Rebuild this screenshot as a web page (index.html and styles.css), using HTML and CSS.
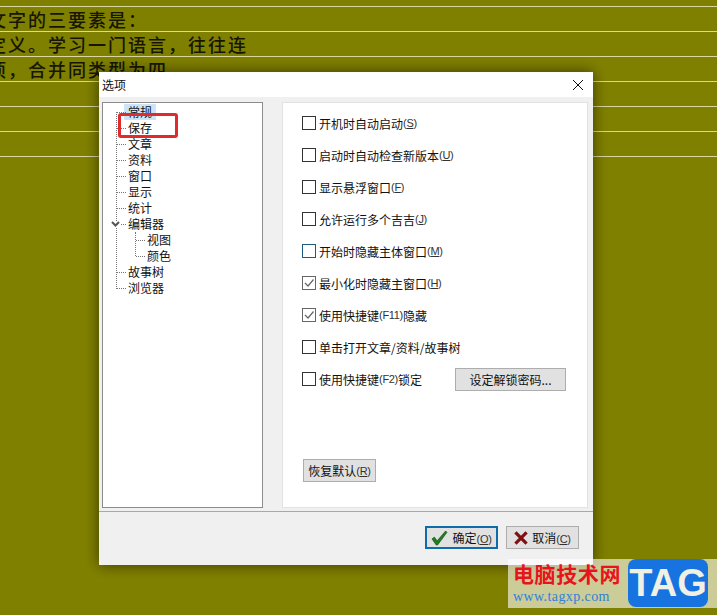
FILE: index.html
```html
<!DOCTYPE html>
<html lang="zh-CN">
<head>
    <meta charset="UTF-8">
    <meta name="viewport" content="width=device-width, initial-scale=1.0">
    <title>选项</title>
    <link rel="stylesheet" href="styles.css">
</head>
<body>
    <div class="page">
        <div class="doc-line"><span class="doc-text">文字的三要素是：</span></div>
        <div class="doc-line"><span class="doc-text">定义。学习一门语言，往往连</span></div>
        <div class="doc-line"><span class="doc-text">项，合并同类型为四</span></div>
        <div class="doc-line"></div>
        <div class="doc-line"></div>
        <div class="doc-line"></div>
    </div>

    <div class="dialog">
        <div class="title-bar">
            <span class="title">选项</span>
            <svg class="close-icon" width="12" height="12" viewBox="0 0 12 12">
                <path d="M1 1L11 11M11 1L1 11" stroke="#111" stroke-width="1" fill="none"/>
            </svg>
        </div>

        <div class="dialog-body">
            <div class="tree">
                <ul class="tree-list">
                    <li class="tree-item"><span class="tree-label selected">常规</span></li>
                    <li class="tree-item"><span class="tree-label">保存</span></li>
                    <li class="tree-item"><span class="tree-label">文章</span></li>
                    <li class="tree-item"><span class="tree-label">资料</span></li>
                    <li class="tree-item"><span class="tree-label">窗口</span></li>
                    <li class="tree-item"><span class="tree-label">显示</span></li>
                    <li class="tree-item"><span class="tree-label">统计</span></li>
                    <li class="tree-item tree-parent">
                        <svg class="chevron" width="9" height="6" viewBox="0 0 9 6">
                            <path d="M1 1L4.500 4.500L8 1" stroke="#555" stroke-width="2" fill="none"/>
                        </svg>
                        <span class="tree-label">编辑器</span>
                        <ul class="tree-sub">
                            <li class="tree-item"><span class="tree-label">视图</span></li>
                            <li class="tree-item"><span class="tree-label">颜色</span></li>
                        </ul>
                    </li>
                    <li class="tree-item"><span class="tree-label">故事树</span></li>
                    <li class="tree-item"><span class="tree-label">浏览器</span></li>
                </ul>
            </div>

            <div class="panel">
                <div class="option"><span class="check"></span>开机时自动启动<span class="key">(<u>S</u>)</span></div>
                <div class="option"><span class="check"></span>启动时自动检查新版本<span class="key">(<u>U</u>)</span></div>
                <div class="option"><span class="check"></span>显示悬浮窗口<span class="key">(<u>F</u>)</span></div>
                <div class="option"><span class="check"></span>允许运行多个吉吉<span class="key">(<u>J</u>)</span></div>
                <div class="option"><span class="check check-hover"></span>开始时隐藏主体窗口<span class="key">(<u>M</u>)</span></div>
                <div class="option">
                    <span class="check check-on">
                        <svg width="12" height="12" viewBox="0 0 12 12"><path d="M2 6L5 9L10.500 2.500" stroke="#666" stroke-width="1.200" fill="none"/></svg>
                    </span>最小化时隐藏主窗口<span class="key">(<u>H</u>)</span>
                </div>
                <div class="option">
                    <span class="check check-on">
                        <svg width="12" height="12" viewBox="0 0 12 12"><path d="M2 6L5 9L10.500 2.500" stroke="#666" stroke-width="1.200" fill="none"/></svg>
                    </span>使用快捷键<span class="key">(F11)</span>隐藏
                </div>
                <div class="option"><span class="check"></span>单击打开文章/资料/故事树</div>
                <div class="option">
                    <span class="check"></span>使用快捷键<span class="key">(F2)</span>锁定
                    <button class="btn btn-lock">设定解锁密码...</button>
                </div>
                <button class="btn btn-reset">恢复默认<span class="key">(<u>R</u>)</span></button>
            </div>
        </div>

        <div class="dialog-footer">
            <button class="btn btn-footer btn-default">
                <svg width="17" height="16" viewBox="0 0 18 17"><path d="M1 9.500L3.500 7.500L6.500 11.500L15.500 1L17 2.500L7 16H5.500Z" fill="#1e7d1e" stroke="#0c4a0c" stroke-width="0.600"/></svg>
                <span>确定<span class="key">(<u>O</u>)</span></span>
            </button>
            <button class="btn btn-footer">
                <svg width="14" height="14" viewBox="0 0 15 15"><path d="M1.500 1.500L13.500 13.500M13.500 1.500L1.500 13.500" stroke="#7d1010" stroke-width="3.400" fill="none"/></svg>
                <span>取消<span class="key">(<u>C</u>)</span></span>
            </button>
        </div>

        <div class="mark-box"></div>
    </div>

    <div class="watermark">
        <div class="wm-text">
            <div class="wm-title">电脑技术网</div>
            <div class="wm-url">www.tagxp.com</div>
        </div>
        <div class="wm-logo">TAG</div>
    </div>
</body>
</html>
```

FILE: styles.css
```css
body {
    font-family: "Noto Sans CJK SC", "Liberation Sans", sans-serif;
    font-size: 12px;
    margin: 0;
    height: 615px;
    overflow: hidden;
    background-color: #808000;
    color: #111;
}
ul {
    list-style: none;
    margin: 0;
    padding: 0;
}

/* document behind the dialog */
.page {
    padding-top: 7px;
}
.doc-line {
    height: 24px;
    border-bottom: 1px solid #d8d8a0;
    display: flex;
    align-items: flex-end;
}
.page .doc-line:first-child {
    border-top: 1px solid #d8d8a0;
    margin-top: -1px;
}
.doc-text {
    margin-left: -12px;
    font-size: 18px;
    line-height: 24px;
    font-weight: 500;
    letter-spacing: 2px;
    white-space: nowrap;
    color: #161600;
}

/* dialog */
.dialog {
    position: absolute;
    left: 99px;
    top: 72px;
    width: 494px;
    height: 493px;
    background-color: #f0f0f0;
    box-shadow: 0 0 14px rgba(0, 0, 0, 0.55);
    display: flex;
    flex-direction: column;
}
.title-bar {
    height: 25px;
    background-color: white;
    display: flex;
    justify-content: space-between;
    align-items: center;
    padding: 0 9px 0 3px;
    flex-shrink: 0;
}
.title {
    line-height: 25px;
}
.dialog-body {
    height: 414px;
    padding: 5px 5px 0 3px;
    display: flex;
    gap: 19px;
    box-sizing: border-box;
    flex-shrink: 0;
}
.tree {
    width: 161px;
    height: 406px;
    box-sizing: border-box;
    background-color: white;
    border: 1px solid #8c8c8c;
    padding: 1px 0 0 13px;
}
.tree-list {
    border-left: 1px dotted #777;
    margin-top: 8px;
    height: 177px;
}
.tree-item {
    height: 16px;
    position: relative;
    top: -8px;
    padding-left: 10px;
    line-height: 16px;
    white-space: nowrap;
}
.tree-item::before {
    content: "";
    position: absolute;
    left: 0;
    top: 8px;
    width: 9px;
    border-top: 1px dotted #777;
}
.tree-label {
    display: inline-block;
    height: 16px;
    line-height: 16px;
    padding: 0 1px;
}
.selected {
    background-color: #cce4f7;
    padding: 0 4px;
    margin-left: -3px;
}
.chevron {
    position: absolute;
    left: -6px;
    top: 5px;
    background-color: white;
}
.tree-parent {
    height: 48px;
}
.tree-sub {
    border-left: 1px dotted #777;
    margin-left: 8px;
    height: 24px;
    position: relative;
}
.tree-sub .tree-item {
    top: 0;
}

/* right panel */
.panel {
    width: 306px;
    height: 406px;
    box-sizing: border-box;
    background-color: white;
    border: 1px solid #e2e2e2;
    padding: 4px 0 0 19px;
}
.option {
    height: 32px;
    display: flex;
    align-items: center;
    white-space: nowrap;
}
.check {
    width: 12px;
    height: 12px;
    border: 1px solid #333;
    margin-right: 3px;
    background-color: white;
    flex-shrink: 0;
    display: flex;
}
.check-hover {
    border-color: #1d5a80;
}
.check-on {
    border-color: #666;
}
.key {
    font-family: "Liberation Sans", sans-serif;
    font-size: 11px;
    color: #333;
    letter-spacing: -0.3px;
}
.btn {
    font-family: "Noto Sans CJK SC", "Liberation Sans", sans-serif;
    font-size: 12px;
    color: #111;
    background-color: #e1e1e1;
    border: 1px solid #adadad;
    padding: 0;
    height: 23px;
    display: flex;
    align-items: center;
    justify-content: center;
    box-sizing: border-box;
}
.btn-lock {
    width: 111px;
    margin-left: 33px;
}
.btn-reset {
    width: 73px;
    margin: 64px 0 0 1px;
}

/* footer */
.dialog-footer {
    flex: 1;
    border-top: 1px solid #a8a8a8;
    display: flex;
    justify-content: flex-end;
    gap: 8px;
    padding: 14px 14px 0 0;
}
.btn-footer {
    width: 73px;
    gap: 4px;
}
.btn-default {
    border: 2px solid #0f6cab;
}
.mark-box {
    position: absolute;
    left: 19px;
    top: 41px;
    width: 54px;
    height: 19px;
    border: 3px solid #e02a2c;
    border-radius: 3px;
}

/* watermark */
.watermark {
    position: absolute;
    left: 508px;
    top: 559px;
    width: 209px;
    height: 49px;
    box-sizing: border-box;
    padding-right: 9px;
    background-color: rgba(255, 255, 255, 0.6);
    display: flex;
    justify-content: space-between;
}
.wm-text {
    padding-left: 5px;
}
.wm-title {
    font-size: 21px;
    line-height: 28px;
    font-weight: 700;
    color: #e8141c;
    letter-spacing: 0.6px;
    white-space: nowrap;
}
.wm-url {
    font-family: "Liberation Serif", serif;
    font-size: 14px;
    line-height: 19px;
    color: #2f80d8;
    letter-spacing: 0.4px;
    white-space: nowrap;
}
.wm-logo {
    width: 80px;
    height: 48px;
    background-color: #1673e0;
    border-radius: 8px;
    color: #f0f0e4;
    font-family: "Liberation Sans", sans-serif;
    font-size: 38px;
    font-weight: 700;
    line-height: 48px;
    text-align: center;
}
```
